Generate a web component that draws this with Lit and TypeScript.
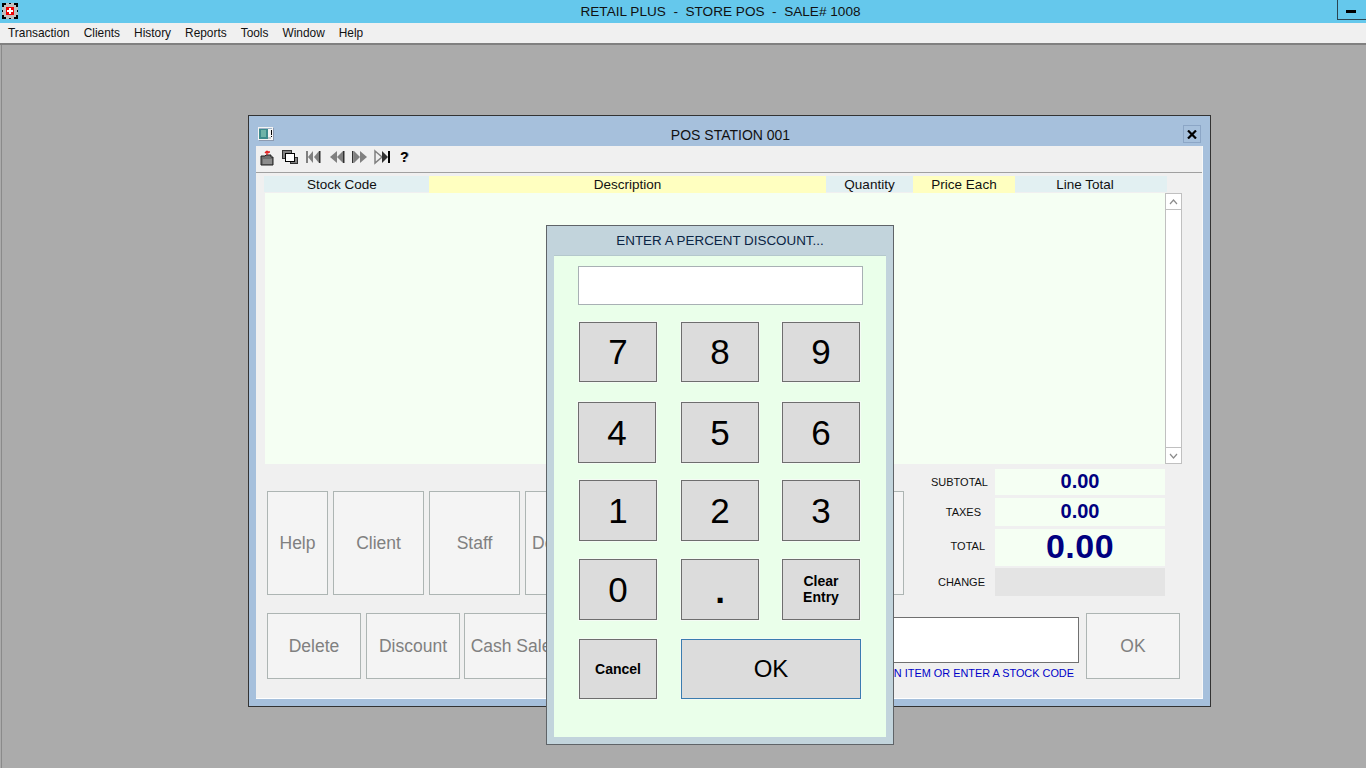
import { LitElement, html, css, svg } from 'lit';
import { customElement } from 'lit/decorators.js';
import { classMap } from 'lit/directives/class-map.js';

const MENU = ['Transaction', 'Clients', 'History', 'Reports', 'Tools', 'Window', 'Help'];

const GRAY = '#808080';
const DARK = '#303030';

// toolbar glyphs, drawn on a 23x18 cell
const ICONS = [
  svg`<path d="M2 7h4l1-1h5v2h2v8H2z" fill="#6e6e6e" stroke="#202020"/><path d="M4 10h9v5H4z" fill="#8c8c8c"/>
      <path d="M8 6V3h3M8 2l-2 2M8 2l2 2" fill="none" stroke="#e02020" stroke-width="1.4"/>`,
  svg`<rect x="0.5" y="1.5" width="9" height="8" fill="${GRAY}" stroke="${DARK}"/>
      <rect x="8.5" y="8.5" width="7" height="6" fill="${GRAY}" stroke="${DARK}"/>
      <rect x="3.5" y="4.5" width="9" height="8" fill="#fff" stroke="#000"/>`,
  svg`<path d="M1 2h2v12H1z" fill="${GRAY}"/><path d="M3 8l5-6v12z" fill="${GRAY}"/><path d="M9 8l5-6v12z" fill="${GRAY}"/><path d="M14 2h1.5v12H14z" fill="${DARK}"/>`,
  svg`<path d="M2 8l7-6v12z" fill="${GRAY}"/><path d="M9 8l6-6v12z" fill="${GRAY}"/><path d="M15 2h1.5v12H15z" fill="${DARK}"/>`,
  svg`<path d="M1 2h1.5v12H1z" fill="${DARK}"/><path d="M3 2l6 6-6 6z" fill="${GRAY}"/><path d="M9 2l7 6-7 6z" fill="${GRAY}"/>`,
  svg`<path d="M1 2l7 6-7 6z" fill="none" stroke="${GRAY}" stroke-width="1.5"/><path d="M8 2l6 6-6 6z" fill="${DARK}"/><path d="M14 2h2v12h-2z" fill="#000"/>`,
];

const PAD = [
  { label: '7', cls: { short: true } },
  { label: '8', cls: { short: true } },
  { label: '9', cls: { short: true } },
  { label: '4', cls: { nudge: true } },
  { label: '5', cls: {} },
  { label: '6', cls: {} },
  { label: '1', cls: {} },
  { label: '2', cls: {} },
  { label: '3', cls: {} },
  { label: '0', cls: {} },
  { label: '.', cls: { dot: true } },
];

@customElement('app-root')
export class AppRoot extends LitElement {
  static styles = css`
    :host {
      display: block;
      width: 1366px;
      height: 768px;
      overflow: hidden;
      position: relative;
      background: #ababab;
      font-family: 'Liberation Sans', Arial, sans-serif;
      color: #000;
    }

    .titlebar {
      height: 23px;
      box-sizing: border-box;
      padding-left: 75px;
      background: #65c8ec;
      display: flex;
      align-items: center;
      justify-content: center;
      position: relative;
      font-size: 13.6px;
      white-space: pre;
      color: #111;
    }
    .app-icon {
      position: absolute;
      left: 2px;
      top: 3px;
    }
    .min-btn {
      position: absolute;
      left: 1337px;
      top: 0;
      width: 29px;
      height: 20px;
      box-sizing: border-box;
      border-left: 1px solid #2a4552;
      border-bottom: 1px solid #2a4552;
    }
    .min-btn::after {
      content: '';
      position: absolute;
      left: 8px;
      top: 10px;
      width: 10px;
      height: 3px;
      background: #000;
    }

    .menubar {
      height: 20px;
      background: #f0f0f0;
      display: flex;
      align-items: center;
      padding-left: 1px;
      font-size: 11.9px;
      color: #111;
      border-bottom: 2px solid #808080;
      box-sizing: content-box;
    }
    .menubar span {
      padding: 0 7px;
    }

    .desktop {
      height: 723px;
      border-left: 1px solid #8a8a8a;
      margin-left: 1px;
    }

    .window {
      position: absolute;
      left: 248px;
      top: 115px;
      width: 963px;
      height: 592px;
      box-sizing: border-box;
      border: 1px solid #333;
      background: #a6c0dc;
      padding: 0 7px 7px;
      display: flex;
      flex-direction: column;
    }
    .win-title {
      height: 30px;
      flex: none;
      position: relative;
      display: flex;
      align-items: center;
      justify-content: center;
      font-size: 14px;
      color: #111;
      padding: 8px 0 0 2px;
      box-sizing: border-box;
    }
    .win-icon {
      position: absolute;
      left: 2px;
      top: 11px;
    }
    .close {
      position: absolute;
      right: 2px;
      top: 9px;
      width: 18px;
      height: 18px;
      box-sizing: border-box;
      border: 1px solid #8ca6c6;
      display: flex;
      align-items: center;
      justify-content: center;
    }

    .content {
      flex: 1;
      background: #f0f0f0;
      border-right: 1px solid #f8f8f8;
      border-bottom: 1px solid #fff;
      display: flex;
      flex-direction: column;
      min-height: 0;
    }

    .toolbar {
      flex: none;
      border-bottom: 1px solid #a0a0a0;
      display: flex;
      padding: 3px 0 0 3px;
      box-sizing: content-box;
      height: 23px;
    }
    .toolbar svg {
      display: block;
      width: 23px;
      height: 18px;
    }
    .help-glyph {
      width: 23px;
      padding-left: 3px;
      box-sizing: border-box;
      font-size: 14px;
      font-weight: bold;
      line-height: 16px;
      text-shadow: 1px 0 0 #a0a0a0;
    }

    .grid-head {
      display: grid;
      grid-template-columns: 165px 397px 87px 102px 152px;
      margin: 3px 0 0 8px;
      width: 903px;
      height: 16px;
      font-size: 13.5px;
      line-height: 17px;
      text-align: center;
      color: #111;
      background: #e2f0f2;
    }
    .grid-head .hl {
      background: #ffffc0;
    }
    .grid-head .first {
      padding-right: 9px;
    }
    .grid-head .last {
      padding-right: 12px;
    }

    .list-row {
      display: flex;
      margin: 1px 0 0 9px;
      height: 271px;
      flex: none;
    }
    .list {
      width: 900px;
      background: #f5fff3;
    }
    .scroll {
      width: 17px;
      box-sizing: border-box;
      border: 1px solid #c0c0c0;
      background: #fff;
      display: flex;
      flex-direction: column;
      justify-content: space-between;
    }
    .scroll div {
      height: 15px;
      display: flex;
      align-items: center;
      justify-content: center;
    }
    .scroll .up {
      border-bottom: 1px solid #c0c0c0;
    }
    .scroll .down {
      border-top: 1px solid #c0c0c0;
    }

    .lower {
      display: flex;
      height: 149px;
      flex: none;
      padding-left: 11px;
    }
    .big-buttons {
      display: flex;
      gap: 5px;
      margin-top: 27px;
      height: 104px;
    }
    .soft {
      box-sizing: border-box;
      border: 1px solid #adb5b3;
      background: #f4f4f4;
      color: #808080;
      font-size: 17.5px;
      display: flex;
      align-items: center;
      justify-content: center;
      white-space: nowrap;
      overflow: hidden;
      flex: none;
    }
    .narrow { width: 61px; }
    .mid { width: 91px; }
    .long { width: 94px; }

    .totals {
      margin: 5px 0 0 27px;
      width: 234px;
      display: flex;
      flex-direction: column;
      font-size: 11px;
      color: #111;
    }
    .tot-row {
      display: flex;
      align-items: center;
      justify-content: flex-end;
    }
    .tot-row .label {
      flex: 1;
      text-align: right;
    }
    .tot-row .value {
      width: 170px;
      height: 100%;
      box-sizing: border-box;
      padding-bottom: 2px;
      background: #f5fff3;
      color: #000080;
      font-weight: bold;
      font-size: 20px;
      display: flex;
      align-items: center;
      justify-content: center;
      flex: none;
    }
    .r-sub { height: 26px; }
    .r-sub .label { padding-right: 7px; }
    .r-tax { height: 28px; margin-top: 3px; }
    .r-tax .label { padding-right: 14px; }
    .r-tot { height: 37px; margin-top: 3px; }
    .r-tot .label { padding-right: 10px; padding-bottom: 4px; }
    .r-tot .value { font-size: 34px; letter-spacing: 0.5px; }
    .r-chg { height: 28px; margin-top: 2px; }
    .r-chg .label { padding-right: 10px; }
    .r-chg .value { background: #e4e4e4; }

    .bottom {
      display: flex;
      gap: 5px;
      height: 66px;
      padding-left: 11px;
      flex: none;
    }
    .bottom .pull {
      margin-left: -1px;
    }
    .entry {
      margin-left: auto;
      width: 440px;
      display: flex;
      flex-direction: column;
      padding-top: 4px;
      box-sizing: border-box;
      margin-right: 2px;
    }
    .entry-input {
      height: 46px;
      flex: none;
      box-sizing: border-box;
      border: 1px solid #707070;
      background: #fff;
    }
    .hint {
      font-size: 10.9px;
      line-height: 14px;
      margin-top: 3px;
      flex: none;
      color: #0000c8;
      text-align: right;
      padding-right: 5px;
      white-space: nowrap;
    }
    .ok-soft {
      margin-right: 22px;
    }

    .dialog {
      position: absolute;
      left: 546px;
      top: 225px;
      width: 348px;
      height: 520px;
      box-sizing: border-box;
      border: 1px solid #5f6468;
      background: #c2d4dc;
      padding: 0 7px 7px;
      display: flex;
      flex-direction: column;
    }
    .dlg-title {
      height: 29px;
      flex: none;
      display: flex;
      align-items: center;
      justify-content: center;
      font-size: 13.4px;
      color: #0a2444;
    }
    .dlg-body {
      flex: 1;
      background: #eaffea;
      border-top: 1px solid #b4c8cc;
      padding: 10px 0 0 24px;
    }
    .dlg-input {
      width: 285px;
      height: 39px;
      box-sizing: border-box;
      background: #fff;
      border: 1px solid #a8b0b4;
    }
    .pad {
      display: grid;
      grid-template-columns: 102px 101px 78px;
      grid-template-rows: 80px 78px 79px 80px 60px;
      margin: 17px 0 0 1px;
    }
    .key {
      align-self: start;
      box-sizing: border-box;
      width: 78px;
      height: 61px;
      border: 1px solid #6e6e6e;
      background: #dcdcdc;
      box-shadow: 0 0 0 1px #f4fbf4;
      font-size: 35px;
      display: flex;
      align-items: center;
      justify-content: center;
      text-align: center;
      color: #000;
    }
    .key.short { height: 60px; }
    .key.nudge { margin-left: -1px; }
    .key.dot { padding-top: 3px; font-weight: bold; }
    .key.small {
      font-size: 14px;
      font-weight: bold;
      line-height: 16px;
    }
    .key.clear { padding-bottom: 2px; }
    .key.enter {
      grid-column: span 2;
      width: 180px;
      height: 60px;
      font-size: 24px;
      border-color: #3b7cb0;
    }
  `;

  private renderAppIcon() {
    return html`<svg class="app-icon" width="16" height="16" viewBox="0 0 16 16" shape-rendering="crispEdges">
      <rect width="16" height="16" fill="#c0c0c0" />
      <path d="M0 0h4v2H2v2H0zM12 0h4v4h-2V2h-2zM0 12h2v2h2v2H0zM14 12h2v4h-4v-2h2zM7 0h2v1H7zM7 15h2v1H7zM0 7h1v2H0zM15 7h1v2h-1z" fill="#000" />
      <rect x="4" y="4" width="8" height="8" fill="#f00000" />
      <path d="M7 5h2v2h2v2H9v2H7V9H5V7h2z" fill="#fff" />
    </svg>`;
  }

  private renderWinIcon() {
    return html`<svg class="win-icon" width="16" height="14" viewBox="0 0 16 14" shape-rendering="crispEdges">
      <rect width="15" height="13" fill="#f4f4f4" />
      <rect x="15" y="1" width="1" height="13" fill="#8c9ab0" />
      <rect x="1" y="13" width="15" height="1" fill="#8c9ab0" />
      <rect x="1" y="1" width="9" height="11" fill="#3d8a8c" />
      <rect x="3" y="3" width="5" height="7" fill="#6fb3a8" />
      <rect x="1" y="1" width="13" height="1" fill="#a0b4c8" />
      <rect x="13" y="3" width="1" height="5" fill="#000" />
      <rect x="13" y="9" width="1" height="1" fill="#000" />
      <rect x="10" y="10" width="3" height="2" fill="#c4c8cc" />
    </svg>`;
  }

  private chevron(up: boolean) {
    return html`<svg width="9" height="6" viewBox="0 0 9 6">
      <path d=${up ? 'M1 5l3.5-4L8 5' : 'M1 1l3.5 4L8 1'} fill="none" stroke="#8c8c8c" stroke-width="1.2" />
    </svg>`;
  }

  render(): unknown {
    return html`
      <div class="titlebar">
        ${this.renderAppIcon()}
        <span>RETAIL PLUS  -  STORE POS  -  SALE# 1008</span>
        <div class="min-btn"></div>
      </div>
      <div class="menubar">${MENU.map((m) => html`<span>${m}</span>`)}</div>
      <div class="desktop"></div>

      <div class="window">
        <div class="win-title">
          ${this.renderWinIcon()}
          <span>POS STATION 001</span>
          <div class="close">
            <svg width="10" height="9" viewBox="0 0 10 9"><path d="M1 0.5l8 8M9 0.5l-8 8" stroke="#000" stroke-width="2.2" /></svg>
          </div>
        </div>
        <div class="content">
          <div class="toolbar">
            ${ICONS.map((i) => html`<svg viewBox="0 0 23 18">${i}</svg>`)}
            <div class="help-glyph">?</div>
          </div>
          <div class="grid-head">
            <div class="first">Stock Code</div>
            <div class="hl">Description</div>
            <div>Quantity</div>
            <div class="hl">Price Each</div>
            <div class="last">Line Total</div>
          </div>
          <div class="list-row">
            <div class="list"></div>
            <div class="scroll">
              <div class="up">${this.chevron(true)}</div>
              <div class="down">${this.chevron(false)}</div>
            </div>
          </div>
          <div class="lower">
            <div class="big-buttons">
              <div class="soft narrow">Help</div>
              <div class="soft mid">Client</div>
              <div class="soft mid">Staff</div>
              <div class="soft mid">Deliveries</div>
              <div class="soft mid"></div>
              <div class="soft mid"></div>
              <div class="soft mid"></div>
            </div>
            <div class="totals">
              <div class="tot-row r-sub"><div class="label">SUBTOTAL</div><div class="value">0.00</div></div>
              <div class="tot-row r-tax"><div class="label">TAXES</div><div class="value">0.00</div></div>
              <div class="tot-row r-tot"><div class="label">TOTAL</div><div class="value">0.00</div></div>
              <div class="tot-row r-chg"><div class="label">CHANGE</div><div class="value"></div></div>
            </div>
          </div>
          <div class="bottom">
            <div class="soft long">Delete</div>
            <div class="soft long">Discount</div>
            <div class="soft long pull">Cash Sale</div>
            <div class="entry">
              <div class="entry-input"></div>
              <div class="hint">SCAN AN ITEM OR ENTER A STOCK CODE</div>
            </div>
            <div class="soft long ok-soft">OK</div>
          </div>
        </div>
      </div>

      <div class="dialog">
        <div class="dlg-title">ENTER A PERCENT DISCOUNT...</div>
        <div class="dlg-body">
          <div class="dlg-input"></div>
          <div class="pad">
            ${PAD.map((k) => html`<div class="key ${classMap(k.cls)}">${k.label}</div>`)}
            <div class="key small clear">Clear<br />Entry</div>
            <div class="key small short">Cancel</div>
            <div class="key enter">OK</div>
          </div>
        </div>
      </div>
    `;
  }
}

declare global {
  interface HTMLElementTagNameMap {
    'app-root': AppRoot;
  }
}
